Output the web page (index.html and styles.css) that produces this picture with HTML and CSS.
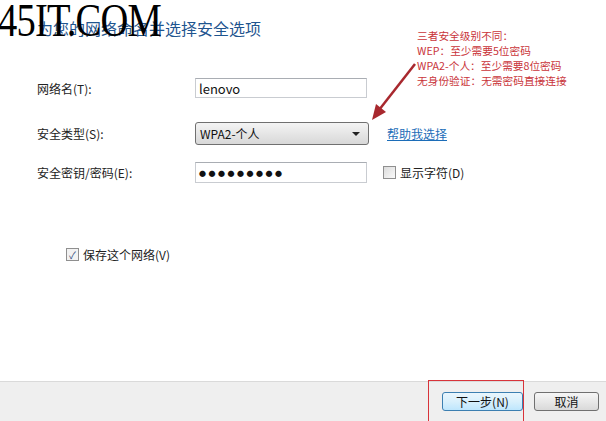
FILE: index.html
```html
<!DOCTYPE html>
<html>
<head>
  <meta charset="utf-8">
  <title>设置无线网络</title>
  <link rel="stylesheet" href="styles.css">
</head>
<body>

<div class="page">
  <div class="main">
    <h2 class="title">为您的网络命名并选择安全选项</h2>

    <div class="row row-name">
      <label class="lbl">网络名(T):</label>
      <div class="field"><span class="val">lenovo</span></div>
    </div>

    <div class="row row-type">
      <label class="lbl">安全类型(S):</label>
      <div class="combo"><span class="val">WPA2-个人</span><span class="caret"></span></div>
      <a class="help" href="#">帮助我选择</a>
    </div>

    <div class="row row-key">
      <label class="lbl">安全密钥/密码(E):</label>
      <div class="field"><span class="dots">●●●●●●●●●</span></div>
      <span class="check"><span class="box"></span>显示字符(D)</span>
    </div>

    <div class="save">
      <span class="check"><span class="box on">✓</span>保存这个网络(V)</span>
    </div>
  </div>

  <div class="bar">
    <button class="btn next">下一步(N)</button>
    <button class="btn">取消</button>
    <span class="mark"></span>
  </div>

  <div class="note">
    三者安全级别不同：<br>
    WEP：至少需要5位密码<br>
    WPA2-个人：至少需要8位密码<br>
    无身份验证：无需密码直接连接
  </div>

  <svg class="arrow" width="60" height="70" viewBox="0 0 60 70">
    <line x1="53" y1="4" x2="17" y2="50" stroke="#a8282e" stroke-width="2.5"/>
    <polygon points="10,60 14,44 24,52" fill="#a8282e"/>
  </svg>

  <div class="logo">45IT.COM</div>
</div>

</body>
</html>
```

FILE: styles.css
```css
body { margin:0; background:#fff; font-family:"Noto Sans CJK SC", "Liberation Sans", sans-serif; font-size:12px; color:#222; }
.page { position:relative; width:606px; height:421px; overflow:hidden; display:flex; flex-direction:column; }
.main { flex:1; padding:18px 0 0 37px; }
.title { margin:0; font-size:16px; font-weight:normal; line-height:20px; color:#1f558f; }

.row { display:flex; align-items:center; }
.row-name { margin-top:40px; height:20px; }
.row-type { margin-top:24px; height:23px; }
.row-key { margin-top:17px; height:21px; }
.lbl { width:158px; flex:none; }

.field { width:172px; height:100%; box-sizing:border-box; border:1px solid #c9ccd1; border-top-color:#a9adb3; display:flex; align-items:center; padding-left:3px; font-size:13px; color:#111; }
.dots { font-size:7px; letter-spacing:2.5px; }
.combo { width:174px; height:100%; box-sizing:border-box; border:1px solid #707070; border-radius:3px; background:linear-gradient(#f4f4f4, #e6e6e6 50%, #d8d8d8); display:flex; align-items:center; padding:0 8px 0 4px; font-size:12px; color:#111; }
.combo .val { flex:1; }
.caret { width:0; height:0; border-left:4px solid transparent; border-right:4px solid transparent; border-top:4px solid #222; }

.help { margin-left:18px; color:#1c6db8; text-decoration:underline; }
.check { display:flex; align-items:center; gap:4px; }
.row .check { margin-left:16px; }
.box { width:11px; height:11px; border:1px solid #8f8f8f; background:linear-gradient(135deg, #dcdcdc, #fafafa); display:flex; align-items:center; justify-content:center; font-size:10px; line-height:1; color:#2c4a7a; }
.box.on { background:#f2f2f2; }
.save { margin:63px 0 0 29px; }

.bar { position:relative; height:39px; border-top:1px solid #dadada; background:#efefef; display:flex; justify-content:flex-end; align-items:center; gap:11px; padding-right:7px; }
.btn { height:19px; width:65px; padding:0; font:12px "Noto Sans CJK SC", sans-serif; color:#111; border:1px solid #707070; border-radius:3px; background:linear-gradient(#f6f6f6, #e8e8e8 50%, #d9d9d9); }
.btn.next { width:81px; border-color:#3c7fb1; background:linear-gradient(#eaf6fd, #d9f0fc 50%, #bee6fd); }
.mark { position:absolute; left:428px; top:-2px; width:94px; height:40px; border:1px solid #d8333a; }

.note { position:absolute; left:417px; top:28px; font-size:10.7px; line-height:15px; color:#c9343a; }
.arrow { position:absolute; left:362px; top:60px; }
.logo { position:absolute; left:-2px; top:-7px; font:47px "Liberation Serif", serif; color:#000; transform:scaleX(0.82); transform-origin:left top; letter-spacing:-1px; }
```
